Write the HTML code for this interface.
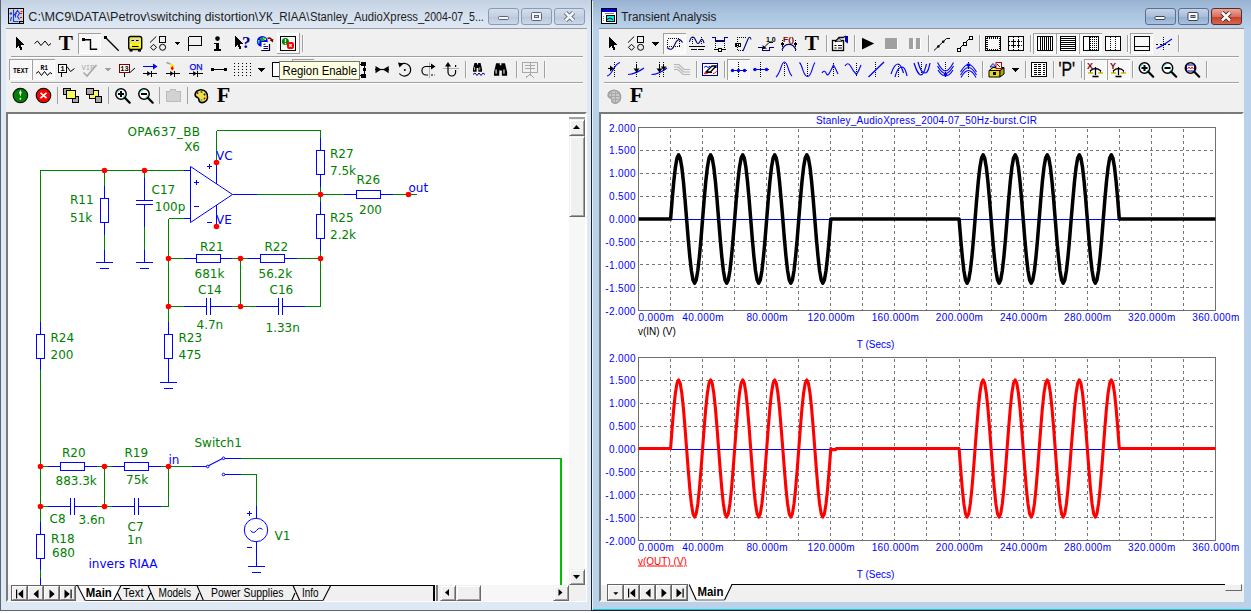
<!DOCTYPE html><html><head><meta charset="utf-8"><title>MC9</title><style>
html,body{margin:0;padding:0}
body{width:1251px;height:613px;position:relative;overflow:hidden;background:#fff;font-family:"Liberation Sans",sans-serif;font-size:12px;color:#000}
.abs,.abs *{position:absolute}
div,svg,span{position:absolute;box-sizing:border-box}
.win{top:-1px;height:612px;border:1px solid #4a4f57}
#wl{left:0;width:592px;background:linear-gradient(#c3d1e2 0,#d3dfed 14px,#dfe9f5 28px,#dfe9f5 100%);border-color:#5d6670}
#wr{left:591px;width:661px;background:linear-gradient(#98b3d1 0,#abc4e0 14px,#b9d1ea 28px,#b9d1ea 100%);border-color:#1d2227}
.title{top:8px;height:18px;line-height:18px;font-size:12px;white-space:nowrap;color:#000}
.client{background:#f0f0f0}
.cb{top:8px;height:17px;width:31px;border:1px solid #8a9bb8;border-radius:3px;background:linear-gradient(#d5deeb,#c3cfe0 50%,#b9c7db 51%,#cdd8e7)}
.cbr{top:8px;height:17px;width:31px;border:1px solid #5b6f8f;border-radius:3px;background:linear-gradient(#c4d3e7,#a9bedb 50%,#93add0 51%,#a9c1df)}
.cbx{background:linear-gradient(#e9a99d,#d9705e 50%,#c4402a 51%,#d8664c);border-color:#5a2a2a}
.hsep{height:2px;border-top:1px solid #a0a0a0;border-bottom:1px solid #fff}
.vsep{width:2px;height:20px;border-left:1px solid #a0a0a0;border-right:1px solid #fff}
.pressed{border:1px solid;border-color:#a0a0a0 #fff #fff #a0a0a0;background:#f8f8f8}
.sunk{border:1px solid;border-color:#828282 #fff #fff #828282}
.sb{background:#f0f0f0;border:1px solid;border-color:#f0f0f0 #696969 #696969 #f0f0f0;box-shadow:inset 1px 1px 0 #fff,inset -1px -1px 0 #a0a0a0}
.track{background:#f7f7f7}
.lab{font-family:"DejaVu Sans","Liberation Sans",sans-serif;font-size:12px;white-space:nowrap;line-height:14px}
.g{color:#0a7d0a}.b{color:#0000ff}
.pl{font-family:"Liberation Sans",sans-serif;font-size:11px;color:#0000ff;white-space:nowrap;line-height:12px}
.tab{font-size:12px;line-height:14px;white-space:nowrap}
</style></head><body><div id="wl" class="win"></div><div class="client" style="left:6px;top:28px;width:581px;height:574px;border-top:1px solid #9a9da3"></div><div class="cb" style="left:488px"></div><div class="cb" style="left:521px"></div><div class="cb" style="left:554px"></div><div id="wr" class="win"></div><div style="left:592px;top:1px;width:1px;height:609px;background:#e8f0fa"></div><div class="client" style="left:599px;top:28px;width:645px;height:574px;border-top:1px solid #8e939b"></div><div class="cbr" style="left:1145px"></div><div class="cbr" style="left:1178px"></div><div class="cbr cbx" style="left:1211px"></div><div style="left:6px;top:112px;width:581px;height:490px;border:2px solid;border-color:#7a7a7a #fff #fff #7a7a7a;background:#fff"></div><div class="track" style="left:569px;top:114px;width:16px;height:471px"></div><div style="left:569px;top:114px;width:16px;height:3px;background:#fff"></div><div style="left:569px;top:117px;width:16px;height:2px;background:#a0a0a0"></div><div class="sb" style="left:569px;top:119px;width:16px;height:17px"></div><svg style="left:569px;top:119px;width:16px;height:17px" viewBox="0 0 16 17" ><polygon points="4.0,10.0 11.0,10.0 7.5,6.0" fill="#000"/></svg><div class="sb" style="left:569px;top:136px;width:16px;height:81px"></div><div class="sb" style="left:569px;top:569px;width:16px;height:16px"></div><svg style="left:569px;top:569px;width:16px;height:16px" viewBox="0 0 16 16" ><polygon points="4.0,6.0 11.0,6.0 7.5,10.0" fill="#000"/></svg><div style="left:8px;top:585px;width:578px;height:16px;background:#f0f0f0"></div><div style="left:78px;top:585px;width:356px;height:1px;background:#000"></div><div style="left:11px;top:585px;width:65px;height:16px;background:#646464"></div><div style="left:12px;top:586px;width:15px;height:14px;background:#f0f0f0;border:1px solid;border-color:#fff #858585 #858585 #fff"></div><div style="left:28px;top:586px;width:15px;height:14px;background:#f0f0f0;border:1px solid;border-color:#fff #858585 #858585 #fff"></div><div style="left:44px;top:586px;width:15px;height:14px;background:#f0f0f0;border:1px solid;border-color:#fff #858585 #858585 #fff"></div><div style="left:60px;top:586px;width:15px;height:14px;background:#f0f0f0;border:1px solid;border-color:#fff #858585 #858585 #fff"></div><svg style="left:11px;top:585px;width:65px;height:16px" viewBox="0 0 65 16" ><rect x="5" y="4.5" width="1.200" height="9" fill="#000"/><polygon points="12.2,4.5 12.2,13.5 7,9.0" fill="#000"/><polygon points="27.5,4.5 27.5,13.5 22.5,9.0" fill="#000"/><polygon points="38.5,4.5 38.5,13.5 43.7,9.0" fill="#000"/><polygon points="53.5,4.5 53.5,13.5 58.8,9.0" fill="#000"/><rect x="59.5" y="4.5" width="1.200" height="9" fill="#000"/></svg><svg style="left:76px;top:585px;width:360px;height:17px" viewBox="0 0 360 17" ><path d="M0 0.500H8.500M43.500 0.500H355" stroke="#000" fill="none"/><path d="M1.500 0.500 L9.200 15.500 H37.500 L45 0.500 Z" fill="#fff" stroke="none"/><path d="M1.500 0.500 L9.200 15.500 M37.500 15.500 L45 0.500" fill="none" stroke="#000" stroke-width="1.100"/><path d="M41.500 8 L45.500 15.500 M70.700 15.500 L74.500 8 M72 0.500 L78.400 15.500 M119.800 15.500 L123 8 M121 0.500 L127.400 15.500 M215.700 15.500 L219 8 M217 0.500 L223.700 15.500 M247 15.500 L254.700 0.500" fill="none" stroke="#000" stroke-width="1.100"/><path d="M9.200 15.500 H247" stroke="#404040" fill="none"/><text x="9.800" y="11.500" font-weight="bold" textLength="26" font-family="Liberation Sans,sans-serif" font-size="12px" lengthAdjust="spacingAndGlyphs">Main</text><text x="47" y="11.500" textLength="20.500" font-family="Liberation Sans,sans-serif" font-size="12px" lengthAdjust="spacingAndGlyphs">Text</text><text x="82.500" y="11.500" textLength="32.500" font-family="Liberation Sans,sans-serif" font-size="12px" lengthAdjust="spacingAndGlyphs">Models</text><text x="135" y="11.500" textLength="72.500" font-family="Liberation Sans,sans-serif" font-size="12px" lengthAdjust="spacingAndGlyphs">Power Supplies</text><text x="226" y="11.500" textLength="16.500" font-family="Liberation Sans,sans-serif" font-size="12px" lengthAdjust="spacingAndGlyphs">Info</text></svg><div style="left:433px;top:585px;width:2px;height:16px;background:#000"></div><div style="left:436px;top:585px;width:2px;height:16px;background:#808080"></div><div class="track" style="left:440px;top:585px;width:129px;height:16px"></div><div class="sb" style="left:440px;top:585px;width:16px;height:16px"></div><svg style="left:440px;top:585px;width:16px;height:16px" viewBox="0 0 16 16" ><polygon points="9.0,4.0 9.0,11.0 5.0,7.5" fill="#000"/></svg><div class="sb" style="left:456px;top:585px;width:25px;height:16px"></div><div class="sb" style="left:553px;top:585px;width:16px;height:16px"></div><svg style="left:553px;top:585px;width:16px;height:16px" viewBox="0 0 16 16" ><polygon points="5.5,4.0 5.5,11.0 9.5,7.5" fill="#000"/></svg><div style="left:599px;top:112px;width:645px;height:490px;border:2px solid;border-color:#7a7a7a #fff #fff #7a7a7a;background:#fff"></div><div style="left:593px;top:609px;width:658px;height:1px;background:#17c7d9"></div><div style="left:601px;top:585px;width:643px;height:17px;background:#f0f0f0"></div><div style="left:731px;top:584px;width:495px;height:1px;background:#000"></div><div style="left:607px;top:584px;width:81px;height:17px;background:#646464"></div><div style="left:608px;top:585px;width:15px;height:15px;background:#f0f0f0;border:1px solid;border-color:#fff #858585 #858585 #fff"></div><div style="left:624px;top:585px;width:15px;height:15px;background:#f0f0f0;border:1px solid;border-color:#fff #858585 #858585 #fff"></div><div style="left:640px;top:585px;width:15px;height:15px;background:#f0f0f0;border:1px solid;border-color:#fff #858585 #858585 #fff"></div><div style="left:656px;top:585px;width:15px;height:15px;background:#f0f0f0;border:1px solid;border-color:#fff #858585 #858585 #fff"></div><div style="left:672px;top:585px;width:15px;height:15px;background:#f0f0f0;border:1px solid;border-color:#fff #858585 #858585 #fff"></div><svg style="left:607px;top:584px;width:81px;height:17px" viewBox="0 0 81 17" ><polygon points="6.3,8.3 11.3,8.3 8.8,11" fill="#000"/><rect x="21" y="4.5" width="1.200" height="9" fill="#000"/><polygon points="28.2,4.5 28.2,13.5 23,9.0" fill="#000"/><polygon points="43.5,4.5 43.5,13.5 38.5,9.0" fill="#000"/><polygon points="54.5,4.5 54.5,13.5 59.7,9.0" fill="#000"/><polygon points="69.5,4.5 69.5,13.5 74.8,9.0" fill="#000"/><rect x="75.5" y="4.5" width="1.200" height="9" fill="#000"/></svg><svg style="left:687.5px;top:584px;width:60px;height:18px" viewBox="0 0 60 18" ><path d="M1.200 0.500 L8.200 16 H36.500 L44 0.500 Z" fill="#fff"/><path d="M1.200 0.500 L8.200 16 M36.500 16 L44 0.500" stroke="#000" stroke-width="1.100" fill="none"/><path d="M8.200 16 H36.500" stroke="#606060"/><text x="9.500" y="11.800" font-weight="bold" textLength="26" font-family="Liberation Sans,sans-serif" font-size="12px" lengthAdjust="spacingAndGlyphs">Main</text></svg><div style="left:1225px;top:584px;width:17px;height:7px;background:#f0f0f0;border:1px solid;border-color:#fff #696969 #696969 #fff"></div><svg style="left:8px;top:114px;width:561px;height:471px" viewBox="8 114 561 471" shape-rendering="crispEdges"><line x1="40.5" y1="170.5" x2="184" y2="170.5" stroke="#008000" stroke-width="1"/><line x1="184" y1="170.5" x2="190.5" y2="170.5" stroke="#0000ff" stroke-width="1"/><line x1="40.5" y1="170" x2="40.5" y2="322" stroke="#008000" stroke-width="1"/><line x1="40.5" y1="322" x2="40.5" y2="334.5" stroke="#0000ff" stroke-width="1"/><rect x="36.5" y="334.5" width="8" height="24" fill="#fff" stroke="#0000ff"/><line x1="40.5" y1="358.5" x2="40.5" y2="370" stroke="#0000ff" stroke-width="1"/><line x1="40.5" y1="370" x2="40.5" y2="506.5" stroke="#008000" stroke-width="1"/><line x1="104.5" y1="170.5" x2="104.5" y2="186" stroke="#008000" stroke-width="1"/><line x1="104.5" y1="186" x2="104.5" y2="198.5" stroke="#0000ff" stroke-width="1"/><rect x="100.5" y="198.5" width="8" height="24" fill="#fff" stroke="#0000ff"/><line x1="104.5" y1="222.5" x2="104.5" y2="235" stroke="#0000ff" stroke-width="1"/><line x1="104.5" y1="235" x2="104.5" y2="250" stroke="#008000" stroke-width="1"/><line x1="104.5" y1="250" x2="104.5" y2="262.5" stroke="#0000ff" stroke-width="1"/><line x1="96.0" y1="262.5" x2="113.0" y2="262.5" stroke="#0000ff" stroke-width="1"/><line x1="100.0" y1="268.5" x2="109.0" y2="268.5" stroke="#0000ff" stroke-width="1"/><line x1="144.5" y1="170.5" x2="144.5" y2="178" stroke="#008000" stroke-width="1"/><line x1="144.5" y1="178" x2="144.5" y2="200.5" stroke="#0000ff" stroke-width="1"/><line x1="136.0" y1="200.5" x2="153.0" y2="200.5" stroke="#0000ff" stroke-width="1"/><line x1="136.0" y1="204.5" x2="153.0" y2="204.5" stroke="#0000ff" stroke-width="1"/><line x1="144.5" y1="204.5" x2="144.5" y2="227" stroke="#0000ff" stroke-width="1"/><line x1="144.5" y1="227" x2="144.5" y2="250" stroke="#008000" stroke-width="1"/><line x1="144.5" y1="250" x2="144.5" y2="262.5" stroke="#0000ff" stroke-width="1"/><line x1="136.0" y1="262.5" x2="153.0" y2="262.5" stroke="#0000ff" stroke-width="1"/><line x1="140.0" y1="268.5" x2="149.0" y2="268.5" stroke="#0000ff" stroke-width="1"/><path d="M190.5 166.5 L190.5 222.5 L232.5 194.5 Z" fill="none" stroke="#0000ff" shape-rendering="auto"/><line x1="232.5" y1="194.5" x2="257" y2="194.5" stroke="#0000ff" stroke-width="1"/><line x1="257" y1="194.5" x2="344" y2="194.5" stroke="#008000" stroke-width="1"/><line x1="216.5" y1="130.5" x2="216.5" y2="162" stroke="#008000" stroke-width="1"/><line x1="216.5" y1="162" x2="216.5" y2="184" stroke="#0000ff" stroke-width="1"/><line x1="216.5" y1="130.5" x2="320.5" y2="130.5" stroke="#008000" stroke-width="1"/><line x1="216.5" y1="205" x2="216.5" y2="226.5" stroke="#0000ff" stroke-width="1"/><line x1="207" y1="166.5" x2="212" y2="166.5" stroke="#0000ff" stroke-width="1"/><line x1="209.5" y1="164" x2="209.5" y2="169" stroke="#0000ff" stroke-width="1"/><line x1="194" y1="182.5" x2="199" y2="182.5" stroke="#0000ff" stroke-width="1"/><line x1="196.5" y1="180" x2="196.5" y2="185" stroke="#0000ff" stroke-width="1"/><line x1="194" y1="206.5" x2="199" y2="206.5" stroke="#0000ff" stroke-width="1"/><line x1="207" y1="222.5" x2="212" y2="222.5" stroke="#0000ff" stroke-width="1"/><line x1="168.5" y1="218.5" x2="184" y2="218.5" stroke="#008000" stroke-width="1"/><line x1="184" y1="218.5" x2="190.5" y2="218.5" stroke="#0000ff" stroke-width="1"/><line x1="168.5" y1="218.5" x2="168.5" y2="322" stroke="#008000" stroke-width="1"/><line x1="168.5" y1="322" x2="168.5" y2="334.5" stroke="#0000ff" stroke-width="1"/><rect x="164.5" y="334.5" width="8" height="24" fill="#fff" stroke="#0000ff"/><line x1="168.5" y1="358.5" x2="168.5" y2="382.5" stroke="#0000ff" stroke-width="1"/><line x1="160.0" y1="382.5" x2="177.0" y2="382.5" stroke="#0000ff" stroke-width="1"/><line x1="164.0" y1="388.5" x2="173.0" y2="388.5" stroke="#0000ff" stroke-width="1"/><line x1="320.5" y1="130.5" x2="320.5" y2="138" stroke="#008000" stroke-width="1"/><line x1="320.5" y1="138" x2="320.5" y2="150.5" stroke="#0000ff" stroke-width="1"/><rect x="316.5" y="150.5" width="8" height="24" fill="#fff" stroke="#0000ff"/><line x1="320.5" y1="174.5" x2="320.5" y2="187" stroke="#0000ff" stroke-width="1"/><line x1="320.5" y1="187" x2="320.5" y2="202" stroke="#008000" stroke-width="1"/><line x1="320.5" y1="202" x2="320.5" y2="214.5" stroke="#0000ff" stroke-width="1"/><rect x="316.5" y="214.5" width="8" height="24" fill="#fff" stroke="#0000ff"/><line x1="320.5" y1="238.5" x2="320.5" y2="251" stroke="#0000ff" stroke-width="1"/><line x1="320.5" y1="251" x2="320.5" y2="306.5" stroke="#008000" stroke-width="1"/><line x1="344" y1="194.5" x2="356.5" y2="194.5" stroke="#0000ff" stroke-width="1"/><rect x="356.5" y="190.5" width="24" height="8" fill="#fff" stroke="#0000ff"/><line x1="380.5" y1="194.5" x2="393" y2="194.5" stroke="#0000ff" stroke-width="1"/><line x1="393" y1="194.5" x2="417" y2="194.5" stroke="#008000" stroke-width="1"/><line x1="168.5" y1="258.5" x2="184" y2="258.5" stroke="#008000" stroke-width="1"/><line x1="184" y1="258.5" x2="196.5" y2="258.5" stroke="#0000ff" stroke-width="1"/><rect x="196.5" y="254.5" width="24" height="8" fill="#fff" stroke="#0000ff"/><line x1="220.5" y1="258.5" x2="232" y2="258.5" stroke="#0000ff" stroke-width="1"/><line x1="232" y1="258.5" x2="248" y2="258.5" stroke="#008000" stroke-width="1"/><line x1="248" y1="258.5" x2="260.5" y2="258.5" stroke="#0000ff" stroke-width="1"/><rect x="260.5" y="254.5" width="24" height="8" fill="#fff" stroke="#0000ff"/><line x1="284.5" y1="258.5" x2="297" y2="258.5" stroke="#0000ff" stroke-width="1"/><line x1="297" y1="258.5" x2="320.5" y2="258.5" stroke="#008000" stroke-width="1"/><line x1="240.5" y1="258.5" x2="240.5" y2="306.5" stroke="#008000" stroke-width="1"/><line x1="168.5" y1="306.5" x2="184" y2="306.5" stroke="#008000" stroke-width="1"/><line x1="184" y1="306.5" x2="206.5" y2="306.5" stroke="#0000ff" stroke-width="1"/><line x1="206.5" y1="298.0" x2="206.5" y2="315.0" stroke="#0000ff" stroke-width="1"/><line x1="210.5" y1="298.0" x2="210.5" y2="315.0" stroke="#0000ff" stroke-width="1"/><line x1="210.5" y1="306.5" x2="232" y2="306.5" stroke="#0000ff" stroke-width="1"/><line x1="232" y1="306.5" x2="256" y2="306.5" stroke="#008000" stroke-width="1"/><line x1="256" y1="306.5" x2="278.5" y2="306.5" stroke="#0000ff" stroke-width="1"/><line x1="278.5" y1="298.0" x2="278.5" y2="315.0" stroke="#0000ff" stroke-width="1"/><line x1="282.5" y1="298.0" x2="282.5" y2="315.0" stroke="#0000ff" stroke-width="1"/><line x1="282.5" y1="306.5" x2="305" y2="306.5" stroke="#0000ff" stroke-width="1"/><line x1="305" y1="306.5" x2="321" y2="306.5" stroke="#008000" stroke-width="1"/><line x1="40.5" y1="466.5" x2="48" y2="466.5" stroke="#008000" stroke-width="1"/><line x1="48" y1="466.5" x2="60.5" y2="466.5" stroke="#0000ff" stroke-width="1"/><rect x="60.5" y="462.5" width="24" height="8" fill="#fff" stroke="#0000ff"/><line x1="84.5" y1="466.5" x2="97" y2="466.5" stroke="#0000ff" stroke-width="1"/><line x1="97" y1="466.5" x2="112" y2="466.5" stroke="#008000" stroke-width="1"/><line x1="112" y1="466.5" x2="124.5" y2="466.5" stroke="#0000ff" stroke-width="1"/><rect x="124.5" y="462.5" width="24" height="8" fill="#fff" stroke="#0000ff"/><line x1="148.5" y1="466.5" x2="161" y2="466.5" stroke="#0000ff" stroke-width="1"/><line x1="161" y1="466.5" x2="192" y2="466.5" stroke="#008000" stroke-width="1"/><line x1="192" y1="466.5" x2="206.5" y2="466.5" stroke="#0000ff" stroke-width="1"/><line x1="104.5" y1="466.5" x2="104.5" y2="506.5" stroke="#008000" stroke-width="1"/><line x1="168.5" y1="466.5" x2="168.5" y2="506.5" stroke="#008000" stroke-width="1"/><line x1="40.5" y1="506.5" x2="48" y2="506.5" stroke="#008000" stroke-width="1"/><line x1="48" y1="506.5" x2="70.5" y2="506.5" stroke="#0000ff" stroke-width="1"/><line x1="70.5" y1="498.0" x2="70.5" y2="515.0" stroke="#0000ff" stroke-width="1"/><line x1="74.5" y1="498.0" x2="74.5" y2="515.0" stroke="#0000ff" stroke-width="1"/><line x1="74.5" y1="506.5" x2="97" y2="506.5" stroke="#0000ff" stroke-width="1"/><line x1="97" y1="506.5" x2="112" y2="506.5" stroke="#008000" stroke-width="1"/><line x1="112" y1="506.5" x2="134.5" y2="506.5" stroke="#0000ff" stroke-width="1"/><line x1="134.5" y1="498.0" x2="134.5" y2="515.0" stroke="#0000ff" stroke-width="1"/><line x1="138.5" y1="498.0" x2="138.5" y2="515.0" stroke="#0000ff" stroke-width="1"/><line x1="138.5" y1="506.5" x2="161" y2="506.5" stroke="#0000ff" stroke-width="1"/><line x1="161" y1="506.5" x2="169" y2="506.5" stroke="#008000" stroke-width="1"/><line x1="40.5" y1="506.5" x2="40.5" y2="522" stroke="#008000" stroke-width="1"/><line x1="40.5" y1="522" x2="40.5" y2="534.5" stroke="#0000ff" stroke-width="1"/><rect x="36.5" y="534.5" width="8" height="24" fill="#fff" stroke="#0000ff"/><line x1="40.5" y1="558.5" x2="40.5" y2="570" stroke="#0000ff" stroke-width="1"/><line x1="40.5" y1="570" x2="40.5" y2="578" stroke="#008000" stroke-width="1"/><line x1="40.5" y1="578" x2="40.5" y2="586" stroke="#0000ff" stroke-width="1"/><g shape-rendering="auto"><line x1="208" y1="466" x2="223" y2="458.3" stroke="#0000ff" stroke-width="1.1"/><circle cx="207.7" cy="466.5" r="1.300" fill="#fff" stroke="#0000ff"/><circle cx="223.5" cy="458.3" r="1.300" fill="#fff" stroke="#0000ff"/><circle cx="223.5" cy="474.5" r="1.300" fill="#fff" stroke="#0000ff"/></g><line x1="225" y1="458.5" x2="241" y2="458.5" stroke="#0000ff" stroke-width="1"/><line x1="241" y1="458.5" x2="560.5" y2="458.5" stroke="#008000" stroke-width="1"/><line x1="225" y1="474.5" x2="241" y2="474.5" stroke="#0000ff" stroke-width="1"/><line x1="241" y1="474.5" x2="256.5" y2="474.5" stroke="#008000" stroke-width="1"/><line x1="256.5" y1="474.5" x2="256.5" y2="506" stroke="#008000" stroke-width="1"/><line x1="256.5" y1="506" x2="256.5" y2="518.5" stroke="#0000ff" stroke-width="1"/><g shape-rendering="auto" fill="none" stroke="#0000ff"><circle cx="256" cy="530" r="11.700" fill="#fff"/><path d="M250.500 530.500 Q253.500 534.500 256.500 530.500 T262.500 529.500"/></g><line x1="256.5" y1="541.5" x2="256.5" y2="566.5" stroke="#0000ff" stroke-width="1"/><line x1="248.0" y1="566.5" x2="265.0" y2="566.5" stroke="#0000ff" stroke-width="1"/><line x1="252.0" y1="572.5" x2="261.0" y2="572.5" stroke="#0000ff" stroke-width="1"/><line x1="247" y1="513.5" x2="252" y2="513.5" stroke="#0000ff" stroke-width="1"/><line x1="249.5" y1="511" x2="249.5" y2="516" stroke="#0000ff" stroke-width="1"/><line x1="247" y1="547.5" x2="252" y2="547.5" stroke="#0000ff" stroke-width="1"/><rect x="560" y="458" width="2" height="127" fill="#00c000"/><g shape-rendering="auto"><circle cx="104.5" cy="170.5" r="2.800" fill="#ff0000"/><circle cx="144.5" cy="170.5" r="2.800" fill="#ff0000"/><circle cx="216.5" cy="162.5" r="2.800" fill="#ff0000"/><circle cx="216.5" cy="226.5" r="2.800" fill="#ff0000"/><circle cx="320.5" cy="194.5" r="2.800" fill="#ff0000"/><circle cx="408.5" cy="194.5" r="2.800" fill="#ff0000"/><circle cx="168.5" cy="258.5" r="2.800" fill="#ff0000"/><circle cx="240.5" cy="258.5" r="2.800" fill="#ff0000"/><circle cx="320.5" cy="258.5" r="2.800" fill="#ff0000"/><circle cx="168.5" cy="306.5" r="2.800" fill="#ff0000"/><circle cx="240.5" cy="306.5" r="2.800" fill="#ff0000"/><circle cx="40.5" cy="466.5" r="2.800" fill="#ff0000"/><circle cx="104.5" cy="466.5" r="2.800" fill="#ff0000"/><circle cx="168.5" cy="466.5" r="2.800" fill="#ff0000"/><circle cx="40.5" cy="506.5" r="2.800" fill="#ff0000"/><circle cx="104.5" cy="506.5" r="2.800" fill="#ff0000"/></g><g font-family="DejaVu Sans, Liberation Sans, sans-serif" font-size="12px"><text x="127.500" y="136" fill="#008000" textLength="72.500" lengthAdjust="spacing">OPA637_BB</text><text x="200" y="151" fill="#008000" text-anchor="end">X6</text><text x="216" y="159.5" fill="#0000ff" text-anchor="start">VC</text><text x="216" y="223.5" fill="#0000ff" text-anchor="start">VE</text><text x="70" y="204" fill="#008000" text-anchor="start">R11</text><text x="70" y="222" fill="#008000" text-anchor="start">51k</text><text x="151.5" y="194" fill="#008000" text-anchor="start">C17</text><text x="154.8" y="211" fill="#008000" text-anchor="start">100p</text><text x="330" y="158" fill="#008000" text-anchor="start">R27</text><text x="330" y="175" fill="#008000" text-anchor="start">7.5k</text><text x="356.5" y="184" fill="#008000" text-anchor="start">R26</text><text x="359" y="214" fill="#008000" text-anchor="start">200</text><text x="330" y="221.5" fill="#008000" text-anchor="start">R25</text><text x="330" y="238.5" fill="#008000" text-anchor="start">2.2k</text><text x="408.5" y="191.5" fill="#0000ff" text-anchor="start">out</text><text x="200" y="250.5" fill="#008000" text-anchor="start">R21</text><text x="194.5" y="277.5" fill="#008000" text-anchor="start">681k</text><text x="264.5" y="250.5" fill="#008000" text-anchor="start">R22</text><text x="258.5" y="277.5" fill="#008000" text-anchor="start">56.2k</text><text x="198" y="293.5" fill="#008000" text-anchor="start">C14</text><text x="196.5" y="328.5" fill="#008000" text-anchor="start">4.7n</text><text x="269.5" y="293.5" fill="#008000" text-anchor="start">C16</text><text x="265.5" y="331.5" fill="#008000" text-anchor="start">1.33n</text><text x="50.5" y="341.5" fill="#008000" text-anchor="start">R24</text><text x="50.5" y="358.5" fill="#008000" text-anchor="start">200</text><text x="178.5" y="341.5" fill="#008000" text-anchor="start">R23</text><text x="178.5" y="358.5" fill="#008000" text-anchor="start">475</text><text x="194.5" y="446.5" fill="#008000" text-anchor="start">Switch1</text><text x="168.5" y="463.5" fill="#0000ff" text-anchor="start">in</text><text x="62" y="456.5" fill="#008000" text-anchor="start">R20</text><text x="55.5" y="484.5" fill="#008000" text-anchor="start">883.3k</text><text x="124.5" y="456.5" fill="#008000" text-anchor="start">R19</text><text x="126" y="483.5" fill="#008000" text-anchor="start">75k</text><text x="49.5" y="522.5" fill="#008000" text-anchor="start">C8</text><text x="78.5" y="523.5" fill="#008000" text-anchor="start">3.6n</text><text x="127.5" y="530.5" fill="#008000" text-anchor="start">C7</text><text x="127" y="543.5" fill="#008000" text-anchor="start">1n</text><text x="51" y="542.5" fill="#008000" text-anchor="start">R18</text><text x="52" y="556.5" fill="#008000" text-anchor="start">680</text><text x="88.5" y="567.5" fill="#0000ff" text-anchor="start">invers RIAA</text><text x="274.5" y="540" fill="#008000" text-anchor="start">V1</text></g></svg><svg style="left:601px;top:114px;width:642px;height:470px" viewBox="601 114 642 470" shape-rendering="crispEdges"><text x="926.5" y="124" text-anchor="middle" font-family="Liberation Sans, sans-serif" font-size="10px" letter-spacing="0.210" fill="#0000ff" shape-rendering="auto">Stanley_AudioXpress_2004-07_50Hz-burst.CIR</text><rect x="638.5" y="127.5" width="577.0" height="183.0" fill="#fff" stroke="#707070"/><path d="M670.5 128.5V310.0M702.5 128.5V310.0M734.5 128.5V310.0M766.5 128.5V310.0M798.5 128.5V310.0M830.5 128.5V310.0M862.5 128.5V310.0M894.5 128.5V310.0M926.5 128.5V310.0M959.5 128.5V310.0M991.5 128.5V310.0M1023.5 128.5V310.0M1055.5 128.5V310.0M1087.5 128.5V310.0M1119.5 128.5V310.0M1151.5 128.5V310.0M1183.5 128.5V310.0M639.5 150.5H1215.0M639.5 173.5H1215.0M639.5 196.5H1215.0M639.5 241.5H1215.0M639.5 264.5H1215.0M639.5 287.5H1215.0" stroke="#767676" stroke-dasharray="3 3" fill="none"/><line x1="639.0" y1="219.5" x2="1215.0" y2="219.5" stroke="#0000ff"/><polyline points="638.5,219.0 670.6,219.0 672.2,199.2 673.8,181.4 675.4,167.2 677.0,158.1 678.6,154.9 680.2,158.1 681.8,167.2 683.4,181.4 685.0,199.2 686.6,219.0 688.2,238.8 689.8,256.6 691.4,270.8 693.0,279.9 694.6,283.1 696.2,279.9 697.8,270.8 699.4,256.6 701.0,238.8 702.6,219.0 704.2,199.2 705.8,181.4 707.4,167.2 709.0,158.1 710.6,154.9 712.2,158.1 713.8,167.2 715.4,181.4 717.0,199.2 718.6,219.0 720.2,238.8 721.8,256.6 723.4,270.8 725.0,279.9 726.7,283.1 728.3,279.9 729.9,270.8 731.5,256.6 733.1,238.8 734.7,219.0 736.3,199.2 737.9,181.4 739.5,167.2 741.1,158.1 742.7,154.9 744.3,158.1 745.9,167.2 747.5,181.4 749.1,199.2 750.7,219.0 752.3,238.8 753.9,256.6 755.5,270.8 757.1,279.9 758.7,283.1 760.3,279.9 761.9,270.8 763.5,256.6 765.1,238.8 766.7,219.0 768.3,199.2 769.9,181.4 771.5,167.2 773.1,158.1 774.7,154.9 776.3,158.1 777.9,167.2 779.5,181.4 781.1,199.2 782.8,219.0 784.4,238.8 786.0,256.6 787.6,270.8 789.2,279.9 790.8,283.1 792.4,279.9 794.0,270.8 795.6,256.6 797.2,238.8 798.8,219.0 800.4,199.2 802.0,181.4 803.6,167.2 805.2,158.1 806.8,154.9 808.4,158.1 810.0,167.2 811.6,181.4 813.2,199.2 814.8,219.0 816.4,238.8 818.0,256.6 819.6,270.8 821.2,279.9 822.8,283.1 824.4,279.9 826.0,270.8 827.6,256.6 829.2,238.8 830.8,219.0 959.1,219.0 960.7,238.8 962.3,256.6 963.9,270.8 965.5,279.9 967.1,283.1 968.7,279.9 970.3,270.8 971.9,256.6 973.5,238.8 975.1,219.0 976.7,199.2 978.3,181.4 979.9,167.2 981.5,158.1 983.1,154.9 984.7,158.1 986.3,167.2 987.9,181.4 989.5,199.2 991.1,219.0 992.7,238.8 994.3,256.6 995.9,270.8 997.5,279.9 999.1,283.1 1000.7,279.9 1002.3,270.8 1003.9,256.6 1005.5,238.8 1007.1,219.0 1008.7,199.2 1010.3,181.4 1011.9,167.2 1013.5,158.1 1015.2,154.9 1016.8,158.1 1018.4,167.2 1020.0,181.4 1021.6,199.2 1023.2,219.0 1024.8,238.8 1026.4,256.6 1028.0,270.8 1029.6,279.9 1031.2,283.1 1032.8,279.9 1034.4,270.8 1036.0,256.6 1037.6,238.8 1039.2,219.0 1040.8,199.2 1042.4,181.4 1044.0,167.2 1045.6,158.1 1047.2,154.9 1048.8,158.1 1050.4,167.2 1052.0,181.4 1053.6,199.2 1055.2,219.0 1056.8,238.8 1058.4,256.6 1060.0,270.8 1061.6,279.9 1063.2,283.1 1064.8,279.9 1066.4,270.8 1068.0,256.6 1069.6,238.8 1071.2,219.0 1072.9,199.2 1074.5,181.4 1076.1,167.2 1077.7,158.1 1079.3,154.9 1080.9,158.1 1082.5,167.2 1084.1,181.4 1085.7,199.2 1087.3,219.0 1088.9,238.8 1090.5,256.6 1092.1,270.8 1093.7,279.9 1095.3,283.1 1096.9,279.9 1098.5,270.8 1100.1,256.6 1101.7,238.8 1103.3,219.0 1104.9,199.2 1106.5,181.4 1108.1,167.2 1109.7,158.1 1111.3,154.9 1112.9,158.1 1114.5,167.2 1116.1,181.4 1117.7,199.2 1119.3,219.0 1215.5,219.0" fill="none" stroke="#000" stroke-width="3.5" stroke-linejoin="round" shape-rendering="auto"/><g font-family="Liberation Sans, sans-serif" font-size="10px" fill="#0000ff" shape-rendering="auto"><text x="635.8" y="131.5" text-anchor="end" letter-spacing="0.350">2.000</text><text x="635.8" y="154.4" text-anchor="end" letter-spacing="0.350">1.500</text><text x="635.8" y="177.2" text-anchor="end" letter-spacing="0.350">1.000</text><text x="635.8" y="200.1" text-anchor="end" letter-spacing="0.350">0.500</text><text x="635.8" y="223.0" text-anchor="end" letter-spacing="0.350">0.000</text><text x="635.8" y="245.9" text-anchor="end" letter-spacing="0.350">-0.500</text><text x="635.8" y="268.8" text-anchor="end" letter-spacing="0.350">-1.000</text><text x="635.8" y="291.6" text-anchor="end" letter-spacing="0.350">-1.500</text><text x="635.8" y="314.5" text-anchor="end" letter-spacing="0.350">-2.000</text><text x="638.5" y="321.0" letter-spacing="0.380">0.000m</text><text x="703.1111111111111" y="321.0" text-anchor="middle" letter-spacing="0.380">40.000m</text><text x="767.2222222222222" y="321.0" text-anchor="middle" letter-spacing="0.380">80.000m</text><text x="831.3333333333334" y="321.0" text-anchor="middle" letter-spacing="0.380">120.000m</text><text x="895.4444444444445" y="321.0" text-anchor="middle" letter-spacing="0.380">160.000m</text><text x="959.5555555555555" y="321.0" text-anchor="middle" letter-spacing="0.380">200.000m</text><text x="1023.6666666666667" y="321.0" text-anchor="middle" letter-spacing="0.380">240.000m</text><text x="1087.7777777777778" y="321.0" text-anchor="middle" letter-spacing="0.380">280.000m</text><text x="1151.888888888889" y="321.0" text-anchor="middle" letter-spacing="0.380">320.000m</text><text x="1216.0" y="321.0" text-anchor="middle" letter-spacing="0.380">360.000m</text><text x="638.0" y="334.5" fill="#000">v(IN) (V)</text><text x="875.5" y="347.5" text-anchor="middle">T (Secs)</text></g><rect x="638.5" y="357.5" width="577.0" height="183.0" fill="#fff" stroke="#707070"/><path d="M670.5 358.5V540.0M702.5 358.5V540.0M734.5 358.5V540.0M766.5 358.5V540.0M798.5 358.5V540.0M830.5 358.5V540.0M862.5 358.5V540.0M894.5 358.5V540.0M926.5 358.5V540.0M959.5 358.5V540.0M991.5 358.5V540.0M1023.5 358.5V540.0M1055.5 358.5V540.0M1087.5 358.5V540.0M1119.5 358.5V540.0M1151.5 358.5V540.0M1183.5 358.5V540.0M639.5 380.5H1215.0M639.5 403.5H1215.0M639.5 426.5H1215.0M639.5 471.5H1215.0M639.5 494.5H1215.0M639.5 517.5H1215.0" stroke="#767676" stroke-dasharray="3 3" fill="none"/><line x1="639.0" y1="449.5" x2="1215.0" y2="449.5" stroke="#0000ff"/><polyline points="638.5,448.5 670.6,448.5 672.2,427.3 673.8,408.2 675.4,393.0 677.0,383.2 678.6,379.9 680.2,383.2 681.8,393.0 683.4,408.2 685.0,427.3 686.6,448.5 688.2,469.7 689.8,488.8 691.4,504.0 693.0,513.8 694.6,517.1 696.2,513.8 697.8,504.0 699.4,488.8 701.0,469.7 702.6,448.5 704.2,427.3 705.8,408.2 707.4,393.0 709.0,383.2 710.6,379.9 712.2,383.2 713.8,393.0 715.4,408.2 717.0,427.3 718.6,448.5 720.2,469.7 721.8,488.8 723.4,504.0 725.0,513.8 726.7,517.1 728.3,513.8 729.9,504.0 731.5,488.8 733.1,469.7 734.7,448.5 736.3,427.3 737.9,408.2 739.5,393.0 741.1,383.2 742.7,379.9 744.3,383.2 745.9,393.0 747.5,408.2 749.1,427.3 750.7,448.5 752.3,469.7 753.9,488.8 755.5,504.0 757.1,513.8 758.7,517.1 760.3,513.8 761.9,504.0 763.5,488.8 765.1,469.7 766.7,448.5 768.3,427.3 769.9,408.2 771.5,393.0 773.1,383.2 774.7,379.9 776.3,383.2 777.9,393.0 779.5,408.2 781.1,427.3 782.8,448.5 784.4,469.7 786.0,488.8 787.6,504.0 789.2,513.8 790.8,517.1 792.4,513.8 794.0,504.0 795.6,488.8 797.2,469.7 798.8,448.5 800.4,427.3 802.0,408.2 803.6,393.0 805.2,383.2 806.8,379.9 808.4,383.2 810.0,393.0 811.6,408.2 813.2,427.3 814.8,448.5 816.4,469.7 818.0,488.8 819.6,504.0 821.2,513.8 822.8,517.1 824.4,513.8 826.0,504.0 827.6,488.8 829.2,469.7 830.8,448.5 831.3,449.6 835.6,449.6 836.3,448.5 959.1,448.5 960.7,469.7 962.3,488.8 963.9,504.0 965.5,513.8 967.1,517.1 968.7,513.8 970.3,504.0 971.9,488.8 973.5,469.7 975.1,448.5 976.7,427.3 978.3,408.2 979.9,393.0 981.5,383.2 983.1,379.9 984.7,383.2 986.3,393.0 987.9,408.2 989.5,427.3 991.1,448.5 992.7,469.7 994.3,488.8 995.9,504.0 997.5,513.8 999.1,517.1 1000.7,513.8 1002.3,504.0 1003.9,488.8 1005.5,469.7 1007.1,448.5 1008.7,427.3 1010.3,408.2 1011.9,393.0 1013.5,383.2 1015.2,379.9 1016.8,383.2 1018.4,393.0 1020.0,408.2 1021.6,427.3 1023.2,448.5 1024.8,469.7 1026.4,488.8 1028.0,504.0 1029.6,513.8 1031.2,517.1 1032.8,513.8 1034.4,504.0 1036.0,488.8 1037.6,469.7 1039.2,448.5 1040.8,427.3 1042.4,408.2 1044.0,393.0 1045.6,383.2 1047.2,379.9 1048.8,383.2 1050.4,393.0 1052.0,408.2 1053.6,427.3 1055.2,448.5 1056.8,469.7 1058.4,488.8 1060.0,504.0 1061.6,513.8 1063.2,517.1 1064.8,513.8 1066.4,504.0 1068.0,488.8 1069.6,469.7 1071.2,448.5 1072.9,427.3 1074.5,408.2 1076.1,393.0 1077.7,383.2 1079.3,379.9 1080.9,383.2 1082.5,393.0 1084.1,408.2 1085.7,427.3 1087.3,448.5 1088.9,469.7 1090.5,488.8 1092.1,504.0 1093.7,513.8 1095.3,517.1 1096.9,513.8 1098.5,504.0 1100.1,488.8 1101.7,469.7 1103.3,448.5 1104.9,427.3 1106.5,408.2 1108.1,393.0 1109.7,383.2 1111.3,379.9 1112.9,383.2 1114.5,393.0 1116.1,408.2 1117.7,427.3 1119.3,448.5 1215.5,448.5" fill="none" stroke="#ff0000" stroke-width="3.1" stroke-linejoin="round" shape-rendering="auto"/><g font-family="Liberation Sans, sans-serif" font-size="10px" fill="#0000ff" shape-rendering="auto"><text x="635.8" y="361.5" text-anchor="end" letter-spacing="0.350">2.000</text><text x="635.8" y="384.4" text-anchor="end" letter-spacing="0.350">1.500</text><text x="635.8" y="407.2" text-anchor="end" letter-spacing="0.350">1.000</text><text x="635.8" y="430.1" text-anchor="end" letter-spacing="0.350">0.500</text><text x="635.8" y="453.0" text-anchor="end" letter-spacing="0.350">0.000</text><text x="635.8" y="475.9" text-anchor="end" letter-spacing="0.350">-0.500</text><text x="635.8" y="498.8" text-anchor="end" letter-spacing="0.350">-1.000</text><text x="635.8" y="521.6" text-anchor="end" letter-spacing="0.350">-1.500</text><text x="635.8" y="544.5" text-anchor="end" letter-spacing="0.350">-2.000</text><text x="638.5" y="551.0" letter-spacing="0.380">0.000m</text><text x="703.1111111111111" y="551.0" text-anchor="middle" letter-spacing="0.380">40.000m</text><text x="767.2222222222222" y="551.0" text-anchor="middle" letter-spacing="0.380">80.000m</text><text x="831.3333333333334" y="551.0" text-anchor="middle" letter-spacing="0.380">120.000m</text><text x="895.4444444444445" y="551.0" text-anchor="middle" letter-spacing="0.380">160.000m</text><text x="959.5555555555555" y="551.0" text-anchor="middle" letter-spacing="0.380">200.000m</text><text x="1023.6666666666667" y="551.0" text-anchor="middle" letter-spacing="0.380">240.000m</text><text x="1087.7777777777778" y="551.0" text-anchor="middle" letter-spacing="0.380">280.000m</text><text x="1151.888888888889" y="551.0" text-anchor="middle" letter-spacing="0.380">320.000m</text><text x="1216.0" y="551.0" text-anchor="middle" letter-spacing="0.380">360.000m</text><text x="638.0" y="564.5" fill="#ff0000" text-decoration="underline">v(OUT) (V)</text><text x="875.5" y="577.5" text-anchor="middle">T (Secs)</text></g></svg><svg style="left:0;top:0;width:1251px;height:613px" viewBox="0 0 1251 613" shape-rendering="crispEdges"><rect x="11" y="56" width="572" height="1" fill="#a0a0a0"/><rect x="11" y="57" width="572" height="1" fill="#fff"/><rect x="11" y="82" width="572" height="1" fill="#a0a0a0"/><rect x="11" y="83" width="572" height="1" fill="#fff"/><path d="M16 37 L16 48 L18.6 45.6 L20.6 50.2 L22.6 49.4 L20.7 44.9 L24.2 44.9 Z" fill="#000"/><polyline points="34.5,43.5 37.5,41 41,45.5 45,41 48.5,45.5 51,43.5" fill="none" stroke="#000" shape-rendering="auto"/><text x="58.800" y="50" font-family="Liberation Serif,serif" font-weight="bold" font-size="20px" textLength="14.200" lengthAdjust="spacingAndGlyphs">T</text><rect x="78" y="33" width="23" height="21" fill="#f8f8f8"/><path d="M78.5 54V33.5H101" stroke="#a0a0a0" fill="none"/><path d="M78.5 53.5H100.5V33.5" stroke="#fff" fill="none"/><rect x="82" y="38" width="3" height="3" fill="#000"/><path d="M85 39.7H90.5V49.2H97.2" stroke="#000" stroke-width="1.4" fill="none" shape-rendering="auto"/><rect x="104" y="36" width="3" height="3" fill="#000"/><line x1="106" y1="38" x2="118.7" y2="50.800" stroke="#000" stroke-width="1.300" shape-rendering="auto"/><g shape-rendering="auto"><rect x="128.7" y="36.5" width="13" height="13" rx="2" fill="#f8f000" stroke="#000" stroke-width="1.4"/><rect x="131" y="38.5" width="8.5" height="4" fill="#d8d8d8"/><path d="M131.5 40.5h2.5M136 40.5h2.5" stroke="#000"/><path d="M132 46.5h6.5" stroke="#000"/><rect x="129.5" y="50" width="3" height="1.6" fill="#000"/><rect x="138" y="50" width="3" height="1.6" fill="#000"/><rect x="130" y="44" width="1.5" height="1.5" fill="#fff"/><rect x="139" y="44" width="1.5" height="1.5" fill="#fff"/></g><g fill="none" stroke="#000" shape-rendering="auto"><line x1="150" y1="42.599999999999994" x2="156.2" y2="36.5"/><rect x="159.5" y="36.8" width="6" height="6" shape-rendering="crispEdges"/><path d="M153.5 44.3 l3 3 l-3 3 l-3 -3 z"/><circle cx="162.6" cy="47.3" r="3"/></g><polygon points="174,41.5 181,41.5 177.5,45.5" fill="#000"/><path d="M188.5 36.5V51M188.5 36.5H201.5V45.5H188.5" stroke="#000" stroke-width="1.3" fill="none"/><circle cx="217.5" cy="38.6" r="2.3" fill="#000" shape-rendering="auto"/><path d="M214 42.5h5.3v6.2h1.8v1.8h-7.3v-1.8h1.9v-4.4h-1.7z" fill="#000"/><path d="M235 36 L235 47 L237.6 44.6 L239.6 49.2 L241.6 48.4 L239.7 43.9 L243.2 43.9 Z" fill="#000"/><text x="242" y="48" font-family="Liberation Serif,serif" font-weight="bold" font-size="17px" fill="#000090">?</text><g shape-rendering="auto"><circle cx="262.300" cy="41.400" r="5.400" fill="#0000ff"/><path d="M259.500 38.500l3-1.500l3.500 1.500l-2 2.500l-3 0z" fill="#20a020"/><path d="M257.500 40.500l2 0l0 3l-1.500 0z" fill="#20c0a0"/><rect x="263" y="37.500" width="1.500" height="1.500" fill="#00ffff"/><rect x="264.500" y="38.500" width="1.500" height="1.500" fill="#ffff00"/><rect x="258" y="40" width="1.500" height="1.500" fill="#00ffff"/><path d="M261.500 42h5.500l2.500 2.500v6h-8z" fill="#fff"/><path d="M261.300 50.500h8.200v-6.500" stroke="#000" fill="none" stroke-width="1.200"/><path d="M263.500 44.300h2M263.500 46.500h4.500M263.500 48.500h4.500" stroke="#000090" stroke-width="1.100"/><path d="M267.500 38.500q3-1.500 4.500 2" stroke="#800000" fill="none" stroke-width="1.400"/><polygon points="269.800,40.200 273.300,38.800 273,42.500" fill="#800000"/></g><rect x="277" y="33" width="23" height="21" fill="#f8f8f8"/><path d="M277.5 54V33.5H300" stroke="#fff" fill="none"/><path d="M277 53.5H299.5V33" stroke="#a0a0a0" fill="none"/><rect x="280.500" y="36.500" width="15" height="14" fill="#f8f8f8" stroke="#000"/><g shape-rendering="auto"><circle cx="285.400" cy="41.500" r="3.500" fill="#008000"/><rect x="284.800" y="39" width="1.300" height="3.200" fill="#fff"/><rect x="284.800" y="43" width="1.300" height="1.300" fill="#fff"/><rect x="287" y="42" width="7" height="7" rx="2" fill="#ff0000"/><path d="M289.200 44.200l2.600 2.600M291.800 44.200l-2.600 2.600" stroke="#fff" stroke-width="1.100"/></g><rect x="302" y="35" width="1" height="17" fill="#a0a0a0"/><rect x="303" y="35" width="1" height="17" fill="#fafafa"/><rect x="9" y="59" width="23" height="21" fill="#f8f8f8"/><path d="M9.5 80V59.5H32" stroke="#a0a0a0" fill="none"/><path d="M9.5 79.5H31.5V59.5" stroke="#fff" fill="none"/><rect x="32" y="59" width="23" height="21" fill="#f8f8f8"/><path d="M32.5 80V59.5H55" stroke="#a0a0a0" fill="none"/><path d="M32.5 79.5H54.5V59.5" stroke="#fff" fill="none"/><text x="13" y="73.200" font-family="Liberation Mono,monospace" font-weight="bold" font-size="7.5px" textLength="15.5" lengthAdjust="spacingAndGlyphs">TEXT</text><text x="40.5" y="70" font-family="Liberation Mono,monospace" font-weight="bold" font-size="7px" textLength="7.5" lengthAdjust="spacingAndGlyphs">R1</text><polyline points="36,73.5 38.5,71.5 41.5,75.5 44.5,71.5 47.5,75.5 50,72.5 52,74" fill="none" stroke="#000" shape-rendering="auto"/><rect x="58.5" y="64.5" width="8" height="8" fill="#fff" stroke="#000" stroke-width="1.3"/><text x="60.3" y="71.3" font-family="Liberation Mono,monospace" font-weight="bold" font-size="7.5px">1</text><path d="M61.5 73V77" stroke="#000"/><polyline points="67,66.5 70.5,71.5 74.5,68.5" fill="none" stroke="#000" shape-rendering="auto"/><text x="81.5" y="69.5" font-family="Liberation Mono,monospace" font-size="8px" fill="#a8a8a8" textLength="13" lengthAdjust="spacingAndGlyphs">VIP</text><polyline points="83.5,72.5 87,76 96.5,65" fill="none" stroke="#a8a8a8" stroke-width="1.6" shape-rendering="auto"/><polygon points="104.5,68 111.5,68 108.0,72" fill="#a0a0a0"/><rect x="119.5" y="64.5" width="10" height="8" fill="#fff" stroke="#800000" stroke-width="1.3"/><text x="120.3" y="71.3" font-family="Liberation Mono,monospace" font-weight="bold" font-size="7.5px" textLength="8.4" lengthAdjust="spacingAndGlyphs">13</text><path d="M124.5 73V77" stroke="#000"/><line x1="130" y1="72.5" x2="135" y2="68" stroke="#000" shape-rendering="auto"/><path d="M143 66.5H155" stroke="#0000ff" stroke-width="1.2"/><polygon points="153,63.5 157.5,66.5 153,69.5" fill="#0000ff" shape-rendering="auto"/><rect x="143" y="73" width="14" height="1" fill="#000"/><polygon points="147.2,71 147.2,76 150.8,73.5" fill="#000" shape-rendering="auto"/><rect x="150.8" y="70.5" width="1.3" height="6" fill="#000"/><g shape-rendering="auto"><path d="M166.5 62.5l4 1.5" stroke="#a0a0a0" stroke-width="1.6"/><path d="M172.2 63.5c2.5 2 2.5 5.5 0 7c-2.5-1.500-2.500-5 0-7z" fill="#ffe800"/><path d="M172.200 66l1.5 2.200l-1.500 2.200l-1.500-2.200z" fill="#f00"/></g><rect x="166" y="73" width="14" height="1" fill="#000"/><polygon points="170.2,71 170.2,76 173.8,73.5" fill="#000" shape-rendering="auto"/><rect x="173.8" y="70.5" width="1.3" height="6" fill="#000"/><text x="189.500" y="69.600" font-family="Liberation Sans,sans-serif" font-size="9.300px" stroke="#0000ff" stroke-width="0.250" fill="#0000ff" textLength="13" lengthAdjust="spacingAndGlyphs">ON</text><rect x="189" y="73" width="14" height="1" fill="#000"/><polygon points="193.2,71 193.2,76 196.8,73.5" fill="#000" shape-rendering="auto"/><rect x="196.8" y="70.5" width="1.3" height="6" fill="#000"/><rect x="211" y="68" width="3" height="3" fill="#000"/><rect x="224" y="68" width="3" height="3" fill="#000"/><rect x="212" y="69" width="14" height="1.200" fill="#000"/><rect x="234" y="63" width="1" height="1" fill="#000"/><rect x="234" y="66" width="1" height="1" fill="#000"/><rect x="234" y="69" width="1" height="1" fill="#000"/><rect x="234" y="72" width="1" height="1" fill="#000"/><rect x="234" y="75" width="1" height="1" fill="#000"/><rect x="238" y="63" width="1" height="1" fill="#000"/><rect x="238" y="66" width="1" height="1" fill="#000"/><rect x="238" y="69" width="1" height="1" fill="#000"/><rect x="238" y="72" width="1" height="1" fill="#000"/><rect x="238" y="75" width="1" height="1" fill="#000"/><rect x="242" y="63" width="1" height="1" fill="#000"/><rect x="242" y="66" width="1" height="1" fill="#000"/><rect x="242" y="69" width="1" height="1" fill="#000"/><rect x="242" y="72" width="1" height="1" fill="#000"/><rect x="242" y="75" width="1" height="1" fill="#000"/><rect x="246" y="63" width="1" height="1" fill="#000"/><rect x="246" y="66" width="1" height="1" fill="#000"/><rect x="246" y="69" width="1" height="1" fill="#000"/><rect x="246" y="72" width="1" height="1" fill="#000"/><rect x="246" y="75" width="1" height="1" fill="#000"/><rect x="250" y="63" width="1" height="1" fill="#000"/><rect x="250" y="66" width="1" height="1" fill="#000"/><rect x="250" y="69" width="1" height="1" fill="#000"/><rect x="250" y="72" width="1" height="1" fill="#000"/><rect x="250" y="75" width="1" height="1" fill="#000"/><polygon points="258,68 265,68 261.5,72" fill="#000"/><rect x="272.700" y="62.700" width="9" height="13.600" fill="#fff" stroke="#000" stroke-width="1.400"/><path d="M292.500 80V59.500H314" stroke="#a0a0a0" fill="none"/><rect x="358" y="64" width="6" height="11" fill="none" stroke="#000"/><rect x="361" y="62" width="5" height="4" fill="#000"/><rect x="361" y="74" width="5" height="4" fill="#000"/><rect x="363" y="68" width="3" height="3" fill="#000"/><rect x="279.500" y="61.500" width="80" height="18" fill="#ffffe1" stroke="#767676"/><text x="282.500" y="74.900" font-family="Liberation Sans,sans-serif" font-size="12px" textLength="74.500" lengthAdjust="spacingAndGlyphs" shape-rendering="auto">Region Enable</text><g shape-rendering="auto"><path d="M375 69.500H389" stroke="#000" stroke-width="1.200"/><polygon points="375.500,66 381.200,69.600 375.500,73.200" fill="#000"/><polygon points="388.700,66 383,69.600 388.700,73.200" fill="#000"/></g><g shape-rendering="auto" fill="none" stroke="#000" stroke-width="1.200"><path d="M400.500 64.800 A6.300 6.300 0 1 1 399.300 73.500"/><polygon points="398,62.500 403.500,63.500 399.500,67.500" fill="#000" stroke="none"/><circle cx="404.800" cy="70" r="1" fill="#000" stroke="none"/></g><g shape-rendering="auto" fill="none" stroke="#000" stroke-width="1.200"><path d="M429.500 62V78" stroke="#b0b0b0" stroke-width="1"/><path d="M431.500 66.500H426 A4 4.200 0 0 0 426 75 H428"/><path d="M431 75h4" stroke-dasharray="2 1.500"/><polygon points="431,63.500 435.500,66.500 431,69.500" fill="#000" stroke="none"/></g><g shape-rendering="auto" fill="none" stroke="#000" stroke-width="1.200"><path d="M443 68.500H459" stroke="#b0b0b0" stroke-width="1"/><path d="M448 65V72 A3.800 4 0 0 0 455.600 72 V70"/><path d="M455.600 67V63.500" stroke-dasharray="2 1.500"/><polygon points="445,66.500 448,62 451,66.500" fill="#000" stroke="none"/></g><rect x="465" y="61" width="1" height="17" fill="#a0a0a0"/><rect x="466" y="61" width="1" height="17" fill="#fafafa"/><g transform="translate(473,63) scale(0.72)" shape-rendering="auto" fill="#000"><path d="M2 0h3.500v2h1.500v-2h3.500l2 8.500v3.500h-5v-5h-2.500v5h-5v-3.500z"/><rect x="1.500" y="6" width="1" height="4" fill="#fff"/><rect x="9" y="6" width="1" height="4" fill="#fff"/></g><polyline points="473,74.500 475,73 477,75.500 479,73 481,75.500 483,73 485,74.500" fill="none" stroke="#000080" shape-rendering="auto"/><g transform="translate(494,63.2) scale(1.05)" shape-rendering="auto" fill="#000"><path d="M2 0h3.500v2h1.500v-2h3.500l2 8.500v3.500h-5v-5h-2.500v5h-5v-3.500z"/><rect x="1.500" y="6" width="1" height="4" fill="#fff"/><rect x="9" y="6" width="1" height="4" fill="#fff"/></g><rect x="516" y="61" width="1" height="17" fill="#a0a0a0"/><rect x="517" y="61" width="1" height="17" fill="#fafafa"/><g fill="none" stroke="#a8a8a8"><rect x="522.500" y="62.500" width="15" height="10" stroke-width="1.600"/><path d="M525 65.500h10M525 68.500h10M530 63v9M530 73v3M526 77.500l4-3l4 3" /></g><rect x="544" y="61" width="1" height="17" fill="#a0a0a0"/><rect x="545" y="61" width="1" height="17" fill="#fafafa"/><g shape-rendering="auto"><circle cx="20.400" cy="95.500" r="7.200" fill="#008000" stroke="#101010" stroke-width="1.200"/><path d="M20.400 90l1.200 2.500l-1.200 4l-1.200-4z" fill="#fff"/><path d="M20.400 97.500l1.100 1.300l-1.100 1.300l-1.100-1.300z" fill="#fff"/><circle cx="43.500" cy="95.500" r="7.200" fill="#ff0000" stroke="#101010" stroke-width="1.200"/><path d="M40.500 92.800l6 5.400M46.500 92.800l-6 5.400" stroke="#fff" stroke-width="1.700"/></g><rect x="57" y="87" width="1" height="17" fill="#a0a0a0"/><rect x="63.500" y="88.500" width="6.500" height="6" fill="#a8a8a8" stroke="#000"/><rect x="72" y="96" width="6" height="6" fill="#a8a8a8" stroke="#000"/><rect x="66.500" y="90.500" width="8.500" height="8" fill="#f8f860" stroke="#000"/><rect x="89.500" y="90.500" width="8.500" height="8" fill="#f8f860" stroke="#000"/><rect x="86.500" y="88.500" width="6.500" height="6" fill="#a8a8a8" stroke="#000"/><rect x="95" y="96" width="6" height="6" fill="#a8a8a8" stroke="#000"/><rect x="108" y="87" width="1" height="17" fill="#a0a0a0"/><g shape-rendering="auto"><circle cx="121" cy="94" r="5.2" fill="#fff" stroke="#000" stroke-width="1.5"/><path d="M117.2 92.5 A4 4 0 0 1 120 90" stroke="#00e0e0" fill="none"/><path d="M122.5 97.8 A4 4 0 0 0 125 95" stroke="#00e0e0" fill="none"/><line x1="124.8" y1="97.8" x2="129.7" y2="102.7" stroke="#000" stroke-width="2.2" stroke-linecap="round"/><rect x="118" y="93" width="6" height="2" fill="#000"/><rect x="120" y="91" width="2" height="6" fill="#000"/></g><g shape-rendering="auto"><circle cx="144" cy="94" r="5.2" fill="#fff" stroke="#000" stroke-width="1.5"/><path d="M140.2 92.5 A4 4 0 0 1 143 90" stroke="#00e0e0" fill="none"/><path d="M145.5 97.8 A4 4 0 0 0 148 95" stroke="#00e0e0" fill="none"/><line x1="147.8" y1="97.8" x2="152.7" y2="102.7" stroke="#000" stroke-width="2.2" stroke-linecap="round"/><rect x="141" y="93" width="6" height="2" fill="#000"/></g><rect x="159" y="87" width="1" height="17" fill="#a0a0a0"/><path d="M166.500 101.500V91.500h3l1.500-2h4l1.500 2h4v10z" fill="#d2d2d2" stroke="#bcbcbc"/><rect x="187" y="87" width="1" height="17" fill="#a0a0a0"/><g shape-rendering="auto"><path d="M200.5 89.8 C205.5 89.5 208.0 93.5 207.5 98 C207.0 102 202.5 103.5 200.0 102 C198.0 101 200.0 98.5 197.5 97.5 C194.0 96.5 194.0 91 200.5 89.8 Z" fill="#f0e040" stroke="#000" stroke-width="1.6"/><circle cx="197.5" cy="93" r="1" fill="#800080"/><circle cx="201.5" cy="92" r="1" fill="#008000"/><circle cx="204.5" cy="94.5" r="1" fill="#0000c0"/><circle cx="204.5" cy="98.5" r="1" fill="#e00000"/><circle cx="201.5" cy="100" r="1" fill="#00c0c0"/></g><text x="216.800" y="102" font-family="Liberation Serif,serif" font-weight="bold" font-size="21px" textLength="13.500" lengthAdjust="spacingAndGlyphs">F</text><rect x="604" y="56" width="635" height="1" fill="#a0a0a0"/><rect x="604" y="57" width="635" height="1" fill="#fff"/><rect x="604" y="82" width="635" height="1" fill="#a0a0a0"/><rect x="604" y="83" width="635" height="1" fill="#fff"/><path d="M609 37 L609 48 L611.6 45.6 L613.6 50.2 L615.6 49.4 L613.7 44.9 L617.2 44.9 Z" fill="#000"/><g fill="none" stroke="#000" shape-rendering="auto"><line x1="628" y1="42.599999999999994" x2="634.2" y2="36.5"/><rect x="637.5" y="36.8" width="6" height="6" shape-rendering="crispEdges"/><path d="M631.5 44.3 l3 3 l-3 3 l-3 -3 z"/><circle cx="640.6" cy="47.3" r="3"/></g><polygon points="652,42 659,42 655.5,46" fill="#000"/><rect x="663" y="33" width="23" height="21" fill="#f8f8f8"/><path d="M663.5 54V33.5H686" stroke="#a0a0a0" fill="none"/><path d="M663.5 53.5H685.5V33.5" stroke="#fff" fill="none"/><rect x="667.500" y="38.500" width="12" height="8" fill="none" stroke="#000" stroke-dasharray="1 1"/><path d="M667 47.500 C671 51 673 49 675 44 C677 39 680 38 682.500 42.500" stroke="#000080" stroke-width="1.100" fill="none" shape-rendering="auto"/><path d="M689.500 42 C691 35.500 694 35.500 696 41 C697.500 45 699 44 700.500 40.500 C701.500 38.500 703 39 704 43" stroke="#000080" stroke-width="1.100" fill="none" shape-rendering="auto"/><line x1="692.5" y1="37" x2="692.5" y2="45" stroke="#000" stroke-dasharray="1 1"/><line x1="701.5" y1="37" x2="701.5" y2="45" stroke="#000" stroke-dasharray="1 1"/><path d="M689 46.500h16M691 49.500h5.500M698 49.500h5.500" stroke="#000" stroke-width="1.200"/><path d="M712 37.500h3.500v3.500h9v-3.500h3.500" stroke="#000080" stroke-width="1.300" fill="none"/><line x1="715.5" y1="41" x2="715.5" y2="49" stroke="#000" stroke-dasharray="1 1"/><line x1="724.5" y1="41" x2="724.5" y2="49" stroke="#000" stroke-dasharray="1 1"/><path d="M714 49.500h4M722 49.500h4" stroke="#000"/><rect x="718.500" y="48" width="3" height="3" fill="none" stroke="#000"/><line x1="737.5" y1="37" x2="737.5" y2="51" stroke="#000" stroke-dasharray="1 1"/><path d="M737 37.500h9M738 50.500h6" stroke="#000" stroke-dasharray="1 1"/><rect x="735" y="43" width="2" height="4" fill="#000"/><rect x="738.500" y="43.500" width="2" height="3" fill="none" stroke="#000"/><path d="M743 51 L748 39 C749 36.500 750.500 36.500 751 39.500" stroke="#000080" stroke-width="1.100" fill="none" shape-rendering="auto"/><text x="766" y="41.500" font-family="Liberation Sans,sans-serif" font-weight="bold" font-size="7px">1.0</text><path d="M773 42.500h-4l-5 5" stroke="#000" fill="none" shape-rendering="auto"/><polygon points="762.500,45 763,49 767,48.500" fill="#000" shape-rendering="auto"/><path d="M758 47.500h4.500v3h7v-3h4.500" stroke="#000080" stroke-width="1.300" fill="none"/><text x="783" y="42" font-family="Liberation Sans,sans-serif" font-weight="bold" font-size="7.500px" fill="#800000" textLength="11" lengthAdjust="spacingAndGlyphs">F()</text><line x1="782.5" y1="40" x2="782.5" y2="51" stroke="#000" stroke-dasharray="1 1"/><line x1="795.5" y1="40" x2="795.5" y2="51" stroke="#000" stroke-dasharray="1 1"/><polygon points="780.500,43 784.500,43 782.500,46.500" fill="#000"/><polygon points="793.500,43 797.500,43 795.500,46.500" fill="#000"/><path d="M782 50 C785 42.500 793 42.500 796 50" stroke="#000080" stroke-width="1.100" fill="none" shape-rendering="auto"/><text x="804.700" y="50" font-family="Liberation Serif,serif" font-weight="bold" font-size="20px" textLength="14.200" lengthAdjust="spacingAndGlyphs">T</text><rect x="826" y="35" width="1" height="17" fill="#a0a0a0"/><rect x="827" y="35" width="1" height="17" fill="#fafafa"/><g shape-rendering="auto"><rect x="832.500" y="40.500" width="11" height="10" fill="#fff" stroke="#000" stroke-width="1.300"/><path d="M834.500 45.500h2M838 45.500h4M834.500 48h2M838 48h4" stroke="#000"/><path d="M835 42l4-4.500l4 0l3-1.500" stroke="#000" fill="none" stroke-width="1.300"/><path d="M836 41.500l3-3.500l3 3.500z" fill="#c0c0c0" stroke="#000" stroke-width="0.600"/><polygon points="845,36 848,36 848,43.500 845,41.500" fill="#0000c0"/></g><rect x="854" y="35" width="1" height="17" fill="#a0a0a0"/><rect x="855" y="35" width="1" height="17" fill="#fafafa"/><polygon points="862,37.800 862,49.400 874.200,43.600" fill="#000" shape-rendering="auto"/><rect x="886" y="39" width="12" height="10.500" fill="#fff"/><rect x="885" y="38" width="12" height="10.500" fill="#a0a0a0"/><rect x="910" y="39" width="4" height="10.500" fill="#fff"/><rect x="909" y="38" width="4" height="10.500" fill="#a0a0a0"/><rect x="917" y="39" width="4" height="10.500" fill="#fff"/><rect x="916" y="38" width="4" height="10.500" fill="#a0a0a0"/><rect x="928" y="35" width="1" height="17" fill="#a0a0a0"/><rect x="929" y="35" width="1" height="17" fill="#fafafa"/><g shape-rendering="auto"><path d="M934 50.500L946.500 38.500H950" stroke="#000" fill="none" stroke-width="1"/><circle cx="938.300" cy="46.500" r="1.300"/><circle cx="943.200" cy="41.700" r="1.300"/></g><line x1="958.500" y1="49.500" x2="970.500" y2="37.500" stroke="#000" stroke-width="1" shape-rendering="auto"/><rect x="957" y="48" width="3" height="3" fill="#fff" stroke="#000"/><rect x="963" y="42" width="3" height="3" fill="#fff" stroke="#000"/><rect x="969" y="36" width="3" height="3" fill="#fff" stroke="#000"/><rect x="979" y="35" width="1" height="17" fill="#a0a0a0"/><rect x="980" y="35" width="1" height="17" fill="#fafafa"/><rect x="985.500" y="36.500" width="15" height="14" fill="#f8f8f8" stroke="#000"/><path d="M987 37.500h12M987 49.500h12" stroke="#000" stroke-width="2" stroke-dasharray="1 1" /><path d="M986.500 38v12M999.500 38v12" stroke="#000" stroke-width="2" stroke-dasharray="1 1"/><rect x="1008.500" y="36.500" width="15" height="14" fill="#f8f8f8" stroke="#000"/><path d="M1013.500 37v13M1018.500 37v13M1009 41.500h14M1009 45.500h14" stroke="#000" stroke-dasharray="1 1"/><path d="M1012 41.500h3M1017 41.500h3M1012 45.500h3M1017 45.500h3M1013.500 40v3M1018.500 40v3M1013.500 44v3M1018.500 44v3" stroke="#000"/><rect x="1030" y="35" width="1" height="17" fill="#a0a0a0"/><rect x="1031" y="35" width="1" height="17" fill="#fafafa"/><rect x="1033" y="33" width="23" height="21" fill="#f8f8f8"/><path d="M1033.5 54V33.5H1056" stroke="#a0a0a0" fill="none"/><path d="M1033.5 53.5H1055.5V33.5" stroke="#fff" fill="none"/><rect x="1056" y="33" width="23" height="21" fill="#f8f8f8"/><path d="M1056.5 54V33.5H1079" stroke="#a0a0a0" fill="none"/><path d="M1056.5 53.5H1078.5V33.5" stroke="#fff" fill="none"/><rect x="1079" y="33" width="23" height="21" fill="#f8f8f8"/><path d="M1079.5 54V33.5H1102" stroke="#a0a0a0" fill="none"/><path d="M1079.5 53.5H1101.5V33.5" stroke="#fff" fill="none"/><rect x="1037.500" y="36.500" width="15" height="14" fill="#fff" stroke="#000" stroke-width="1.300"/><path d="M1040.500 37v13M1042.500 37v13M1044.500 37v13M1046.500 37v13M1048.500 37v13M1050.500 37v13" stroke="#000"/><rect x="1060.500" y="36.500" width="15" height="14" fill="#fff" stroke="#000" stroke-width="1.300"/><path d="M1061 38.500h14M1061 40.500h14M1061 42.500h14M1061 44.500h14M1061 46.500h14M1061 48.500h14" stroke="#000"/><rect x="1083.500" y="36.500" width="15" height="14" fill="#fff" stroke="#000" stroke-width="1.300"/><path d="M1090.500 37v13M1092.500 37v13M1094.500 37v13M1096.500 37v13" stroke="#000" stroke-dasharray="1 1"/><path d="M1089.500 37v13" stroke="#000"/><rect x="1105.500" y="36.500" width="15" height="14" fill="#fff" stroke="#000" stroke-width="1.300"/><path d="M1110.500 37v13M1115.500 37v13" stroke="#000" stroke-dasharray="1 1"/><rect x="1127" y="35" width="1" height="17" fill="#a0a0a0"/><rect x="1128" y="35" width="1" height="17" fill="#fafafa"/><rect x="1130" y="33" width="23" height="21" fill="#f8f8f8"/><path d="M1130.5 54V33.5H1153" stroke="#a0a0a0" fill="none"/><path d="M1130.5 53.5H1152.5V33.5" stroke="#fff" fill="none"/><rect x="1134.500" y="36.500" width="15" height="14" fill="#f8f8f8" stroke="#000" stroke-width="1.300"/><path d="M1135 46.500h14" stroke="#000" stroke-width="1.300"/><line x1="1163.5" y1="37" x2="1163.5" y2="51" stroke="#000" stroke-dasharray="1 1"/><path d="M1156 44.500h16" stroke="#000" stroke-dasharray="2 2"/><path d="M1156.500 48.500 C1162 46.500 1166 43 1172 39" stroke="#0000ff" stroke-width="1.100" fill="none" shape-rendering="auto"/><rect x="1178" y="35" width="1" height="17" fill="#a0a0a0"/><rect x="1179" y="35" width="1" height="17" fill="#fafafa"/><path d="M607 76 C613 75 613.500 64 620 62.500" stroke="#0000ff" stroke-width="1.100" fill="none" shape-rendering="auto"/><line x1="614.5" y1="62" x2="614.5" y2="77" stroke="#000" stroke-dasharray="1 1"/><path d="M607.500 68.500h5" stroke="#000" stroke-width="1.300"/><polygon points="610,65.500 614,68.500 610,71.500" fill="#000" shape-rendering="auto"/><path d="M628 74.500 C634 74.500 638 72 644 68" stroke="#0000ff" stroke-width="1.100" fill="none" shape-rendering="auto"/><line x1="636.5" y1="62" x2="636.5" y2="77" stroke="#000" stroke-dasharray="1 1"/><path d="M636.500 64v6" stroke="#000" stroke-width="1.300"/><polygon points="633.500,68.500 639.500,68.500 636.500,72.500" fill="#000" shape-rendering="auto"/><path d="M651.500 74.500 C657 74.500 662 72 667 68" stroke="#0000ff" stroke-width="1.100" fill="none" shape-rendering="auto"/><line x1="659.5" y1="62" x2="659.5" y2="77" stroke="#000" stroke-dasharray="1 1"/><line x1="663.5" y1="62" x2="663.5" y2="77" stroke="#000" stroke-dasharray="1 1"/><path d="M659.500 64v6M663.500 64v4" stroke="#000" stroke-width="1.300"/><polygon points="656.500,68.500 662.500,68.500 659.500,72.500" fill="#000" shape-rendering="auto"/><polygon points="661,66.500 666.500,66.500 663.500,70.500" fill="#000" shape-rendering="auto"/><g shape-rendering="auto" fill="none" stroke="#b4b4b4" stroke-width="1.100"><path d="M674 64.500h5l5 5h6"/><path d="M674 67h4.500l5 5h6.500"/><path d="M674 69.500h4l5 5h7"/></g><rect x="696" y="61" width="1" height="17" fill="#a0a0a0"/><rect x="697" y="61" width="1" height="17" fill="#fafafa"/><rect x="702.700" y="63.700" width="15" height="11.600" fill="#fff" stroke="#000080" stroke-width="1.500"/><path d="M704 67.500l2-1.500l2 1.500l2-1.500M714 68l3-1" stroke="#0000ff" fill="none" shape-rendering="auto"/><path d="M704 73.500c3 1 4-1 5-1M713 73.500c2 0 3-1.500 4-3" stroke="#f00" fill="none" shape-rendering="auto"/><path d="M706 72l6-6h4l-5.500 6z" fill="#fff" stroke="#000" stroke-width="1.300" shape-rendering="auto"/><path d="M707 72.500h5" stroke="#000" stroke-width="1.500"/><rect x="724" y="61" width="1" height="17" fill="#a0a0a0"/><rect x="725" y="61" width="1" height="17" fill="#fafafa"/><rect x="727" y="59" width="23" height="21" fill="#f8f8f8"/><path d="M727.5 80V59.5H750" stroke="#a0a0a0" fill="none"/><path d="M727.5 79.5H749.5V59.5" stroke="#fff" fill="none"/><line x1="738.5" y1="62" x2="738.5" y2="78" stroke="#000" stroke-dasharray="1 1"/><path d="M731 70.500h16" stroke="#0000ff" stroke-width="1.300"/><g fill="#0000ff" shape-rendering="auto"><circle cx="732.500" cy="70.500" r="1.700"/><circle cx="738.500" cy="70.500" r="1.700"/><circle cx="744.500" cy="70.500" r="1.700"/></g><line x1="760.5" y1="62" x2="760.5" y2="77" stroke="#000" stroke-dasharray="1 1"/><path d="M753 69.500h16" stroke="#0000ff" stroke-width="1.300"/><g fill="#0000ff" shape-rendering="auto"><circle cx="755" cy="69.500" r="1.700"/><circle cx="766.500" cy="69.500" r="1.700"/></g><line x1="784.5" y1="63" x2="784.5" y2="77" stroke="#000" stroke-dasharray="1 1"/><path d="M776 77 C781 73 781 62 784.500 62 C788 62 788 73 792 76" stroke="#0000ff" stroke-width="1.100" fill="none" shape-rendering="auto"/><line x1="807.5" y1="63" x2="807.5" y2="77" stroke="#000" stroke-dasharray="1 1"/><path d="M799.500 62.500 C803 66 803 76.500 807.500 76.500 C812 76.500 812 66 815 62.500" stroke="#0000ff" stroke-width="1.100" fill="none" shape-rendering="auto"/><line x1="833.5" y1="63" x2="833.5" y2="77" stroke="#000" stroke-dasharray="1 1"/><path d="M822 73 C823.500 70 825.500 71 826.500 74 C828 77 830 72 833.500 65 C835.500 68 836.500 71 838 74" stroke="#0000ff" stroke-width="1.100" fill="none" shape-rendering="auto"/><line x1="856.5" y1="63" x2="856.5" y2="77" stroke="#000" stroke-dasharray="1 1"/><path d="M845 66 C846.500 63 849 63 850.500 66 C852.500 70 854 72 856.500 74.500 C858.500 71 860 68 861 65" stroke="#0000ff" stroke-width="1.100" fill="none" shape-rendering="auto"/><line x1="875.5" y1="62" x2="875.5" y2="77" stroke="#000" stroke-dasharray="1 1"/><path d="M868.500 77L884 62" stroke="#0000ff" stroke-width="1.300" shape-rendering="auto"/><line x1="898.5" y1="64" x2="898.5" y2="77" stroke="#000" stroke-dasharray="1 1"/><path d="M891 74 C893 68 895 64 898 64 C901 64 902 69 903.500 73M895 77 C896.500 71 899 67 902 67 C905 67 906 71 907 76" stroke="#0000ff" stroke-width="1.200" fill="none" shape-rendering="auto"/><line x1="921.5" y1="62" x2="921.5" y2="76" stroke="#000" stroke-dasharray="1 1"/><path d="M914 63 C916 69 918 75 921 75 C924 75 925 69 926.500 64M918 62 C919.500 68 922 73 925 73 C928 73 929 68 930 63" stroke="#0000ff" stroke-width="1.200" fill="none" shape-rendering="auto"/><line x1="945.5" y1="62" x2="945.5" y2="77" stroke="#000" stroke-dasharray="1 1"/><path d="M937.500 62.500 C941 69 943 71 945.500 71 C948 71 950 69 953.500 62.500M937.500 66 C941 72 943 73.500 945.500 73.500 C948 73.500 950 72 953.500 66M938 70 C941 75 943 76 945.500 76 C948 76 950 75 953 70" stroke="#0000ff" stroke-width="1.100" fill="none" shape-rendering="auto"/><circle cx="945.500" cy="74.500" r="1.800" fill="#0000ff" shape-rendering="auto"/><line x1="968.5" y1="62" x2="968.5" y2="77" stroke="#000" stroke-dasharray="1 1"/><path d="M960.500 72 C964 66 966 64.500 968.500 64.500 C971 64.500 973 66 976.500 72M960.500 75 C964 69 966 67.500 968.500 67.500 C971 67.500 973 69 976.500 75M961 77.500 C964 72 966 70.500 968.500 70.500 C971 70.500 973 72 976 77.500" stroke="#0000ff" stroke-width="1.100" fill="none" shape-rendering="auto"/><circle cx="968.500" cy="65" r="1.800" fill="#0000ff" shape-rendering="auto"/><rect x="982" y="61" width="1" height="17" fill="#a0a0a0"/><rect x="983" y="61" width="1" height="17" fill="#fafafa"/><g shape-rendering="auto"><path d="M989 70.500h11v6.500h-11z" fill="#e0d820" stroke="#000"/><path d="M1000 70.500l4-3v6.500l-4 3z" fill="#b0a810" stroke="#000"/><path d="M989 70.500l4-3h11l-4 3z" fill="#f0f060" stroke="#000"/><rect x="996" y="62.500" width="5.500" height="6" fill="#fff" stroke="#c00000"/><path d="M997 64l3 3" stroke="#c00000"/><path d="M990 67l3-3.500l3 3.500z" fill="#c0c0ff" stroke="#000080" stroke-width="0.800"/><rect x="993" y="72" width="3" height="3" fill="#000"/></g><polygon points="1012,68 1019,68 1015.5,72" fill="#000"/><rect x="1025" y="61" width="1" height="17" fill="#a0a0a0"/><rect x="1026" y="61" width="1" height="17" fill="#fafafa"/><rect x="1031.500" y="62.500" width="15" height="14" fill="#fff" stroke="#000" stroke-width="1.200"/><path d="M1033.500 64.5h3M1038 64.5h3M1042.500 64.5h2.500M1033.500 66.5h3M1038 66.5h3M1042.500 66.5h2.500M1033.500 68.5h3M1038 68.5h3M1042.500 68.5h2.500M1033.500 70.5h3M1038 70.5h3M1042.500 70.5h2.500M1033.500 72.5h3M1038 72.5h3M1042.500 72.5h2.500M1033.500 74.5h3M1038 74.5h3M1042.500 74.5h2.500" stroke="#000"/><rect x="1053" y="61" width="1" height="17" fill="#a0a0a0"/><rect x="1054" y="61" width="1" height="17" fill="#fafafa"/><text x="1058.500" y="76.300" font-family="Liberation Sans,sans-serif" font-size="19.500px" stroke="#000" stroke-width="0.300" textLength="16.500" lengthAdjust="spacingAndGlyphs">'P'</text><rect x="1081" y="61" width="1" height="17" fill="#a0a0a0"/><rect x="1082" y="61" width="1" height="17" fill="#fafafa"/><rect x="1084" y="59" width="23" height="21" fill="#f8f8f8"/><path d="M1084.5 80V59.5H1107" stroke="#a0a0a0" fill="none"/><path d="M1084.5 79.5H1106.5V59.5" stroke="#fff" fill="none"/><rect x="1107" y="59" width="23" height="21" fill="#f8f8f8"/><path d="M1107.5 80V59.5H1130" stroke="#a0a0a0" fill="none"/><path d="M1107.5 79.5H1129.5V59.5" stroke="#fff" fill="none"/><text x="1087" y="69" font-family="Liberation Sans,sans-serif" font-weight="bold" font-size="9px" fill="#800000">X</text><g shape-rendering="auto" stroke="#000" fill="none"><path d="M1095.5 67V75M1090 71 Q1095.5 66 1101 71" stroke-width="1.2"/><path d="M1092.5 76.5h6" stroke-width="1.6"/><path d="M1088 73h5M1098 73h5" stroke="#c8c000" stroke-width="1.6"/><path d="M1090.5 70v2.5M1100.5 70v2.5" stroke-width="0.8"/></g><text x="1110" y="69" font-family="Liberation Sans,sans-serif" font-weight="bold" font-size="9px" fill="#800000">Y</text><g shape-rendering="auto" stroke="#000" fill="none"><path d="M1118.5 67V75M1113 71 Q1118.5 66 1124 71" stroke-width="1.2"/><path d="M1115.5 76.5h6" stroke-width="1.6"/><path d="M1111 73h5M1121 73h5" stroke="#c8c000" stroke-width="1.6"/><path d="M1113.5 70v2.5M1123.5 70v2.5" stroke-width="0.8"/></g><rect x="1132" y="61" width="1" height="17" fill="#a0a0a0"/><rect x="1133" y="61" width="1" height="17" fill="#fafafa"/><g shape-rendering="auto"><circle cx="1144.5" cy="68" r="5.2" fill="#fff" stroke="#000" stroke-width="1.5"/><path d="M1140.7 66.5 A4 4 0 0 1 1143.5 64" stroke="#00e0e0" fill="none"/><path d="M1146.0 71.8 A4 4 0 0 0 1148.5 69" stroke="#00e0e0" fill="none"/><line x1="1148.3" y1="71.8" x2="1153.2" y2="76.7" stroke="#000" stroke-width="2.2" stroke-linecap="round"/><rect x="1141.5" y="67" width="6" height="2" fill="#000"/><rect x="1143.5" y="65" width="2" height="6" fill="#000"/></g><g shape-rendering="auto"><circle cx="1167.5" cy="68" r="5.2" fill="#fff" stroke="#000" stroke-width="1.5"/><path d="M1163.7 66.5 A4 4 0 0 1 1166.5 64" stroke="#00e0e0" fill="none"/><path d="M1169.0 71.8 A4 4 0 0 0 1171.5 69" stroke="#00e0e0" fill="none"/><line x1="1171.3" y1="71.8" x2="1176.2" y2="76.7" stroke="#000" stroke-width="2.2" stroke-linecap="round"/><rect x="1164.5" y="67" width="6" height="2" fill="#000"/></g><g shape-rendering="auto"><circle cx="1190.5" cy="68" r="5.2" fill="#fff" stroke="#000" stroke-width="1.5"/><path d="M1186.7 66.5 A4 4 0 0 1 1189.5 64" stroke="#00e0e0" fill="none"/><path d="M1192.0 71.8 A4 4 0 0 0 1194.5 69" stroke="#00e0e0" fill="none"/><line x1="1194.3" y1="71.8" x2="1199.2" y2="76.7" stroke="#000" stroke-width="2.2" stroke-linecap="round"/><rect x="1186.5" y="65" width="8" height="6" fill="#fff" stroke="#000080"/><path d="M1187.5 69 l1.5 -2 l1.5 2 l1.5 -2 l1.5 2" stroke="#f00" fill="none"/></g><rect x="1206" y="61" width="1" height="17" fill="#a0a0a0"/><rect x="1207" y="61" width="1" height="17" fill="#fafafa"/><g shape-rendering="auto"><path d="M613.5 90.3 C618.5 90.0 621.0 94.0 620.5 98.5 C620.0 102.5 615.5 104.0 613.0 102.5 C611.0 101.5 613.0 99.0 610.5 98.0 C607.0 97.0 607.0 91.5 613.5 90.3 Z" fill="#c8c8c8" stroke="#a0a0a0" stroke-width="1.6"/><path d="M609.5 93.5h9M609.5 96.5h10M612.5 99.5h7M611.5 91.5v10M615.5 91.5v11" stroke="#a8a8a8" fill="none"/></g><text x="629.800" y="102" font-family="Liberation Serif,serif" font-weight="bold" font-size="21px" textLength="13.500" lengthAdjust="spacingAndGlyphs">F</text><rect x="8" y="8" width="16" height="16" fill="#000"/><rect x="9" y="9" width="14" height="14" fill="#d2d2d2"/><g shape-rendering="auto" fill="none"><path d="M13.500 9.500V21.500H18.500M9.500 13.500h2.500M11 12v3M11.500 17l-1 4M14 15.500L17.500 10.500L19.500 13.500L17.500 16.500L19.500 19.500M15.500 12.500v5" stroke="#0040ff" stroke-width="1.100"/><path d="M20.500 11.500h2M15 13.500h2M20 13.500h2M20 17.500h2" stroke="#ff0000" stroke-width="1.200"/></g><rect x="19" y="21" width="4" height="2" fill="#000"/><rect x="19.500" y="21.500" width="3" height="1" fill="#c0c0c0"/><rect x="601" y="8" width="16" height="16" fill="#000"/><rect x="602" y="9" width="14" height="3" fill="#0000e0"/><rect x="602" y="12" width="14" height="11" fill="#fff"/><path d="M605 13.500h9" stroke="#808080"/><rect x="606" y="15.500" width="8" height="6" fill="#00f0f0" stroke="#000"/><path d="M607 19.500q3-3 6 0" stroke="#000" fill="none" shape-rendering="auto"/><path d="M603.500 16v1M603.500 18v1M603.500 20v1" stroke="#808080"/><g shape-rendering="auto"><rect x="498.500" y="16.500" width="10" height="3" rx="1" fill="#f4f6fa" stroke="#5a6478"/><rect x="531.500" y="12.500" width="10" height="8" rx="1" fill="#f4f6fa" stroke="#5a6478"/><rect x="534.500" y="15.500" width="4" height="2" fill="#c8d2e2" stroke="#5a6478"/><path d="M565.500 12.500l8 8M573.500 12.500l-8 8" stroke="#5a6478" stroke-width="4.500"/><path d="M565.500 12.500l8 8M573.500 12.500l-8 8" stroke="#f4f6fa" stroke-width="2.500"/></g><g shape-rendering="auto"><rect x="1155" y="16.500" width="10" height="3" rx="1" fill="#fff" stroke="#3a4660"/><rect x="1188" y="12.500" width="10" height="8" rx="1" fill="#fff" stroke="#3a4660"/><rect x="1191" y="15.500" width="4" height="2" fill="#9fb4d4" stroke="#3a4660"/><path d="M1222 12.500l8 8M1230 12.500l-8 8" stroke="#4a2020" stroke-width="4.500"/><path d="M1222 12.500l8 8M1230 12.500l-8 8" stroke="#fff" stroke-width="2.500"/></g><text x="28.3" y="21" textLength="121.9" font-family="Liberation Sans,sans-serif" font-size="12px" lengthAdjust="spacingAndGlyphs" shape-rendering="auto" fill="#1c1c1c">C:\MC9\DATA\Petrov\</text><text x="150.4" y="21" textLength="107.9" font-family="Liberation Sans,sans-serif" font-size="12px" lengthAdjust="spacingAndGlyphs" shape-rendering="auto" fill="#1c1c1c">switching distortion\</text><text x="258.6" y="21" textLength="51.0" font-family="Liberation Sans,sans-serif" font-size="12px" lengthAdjust="spacingAndGlyphs" shape-rendering="auto" fill="#1c1c1c">УК_RIAA\</text><text x="309.9" y="21" textLength="114.4" font-family="Liberation Sans,sans-serif" font-size="12px" lengthAdjust="spacingAndGlyphs" shape-rendering="auto" fill="#1c1c1c">Stanley_AudioXpress_</text><text x="424.3" y="21" textLength="59.5" font-family="Liberation Sans,sans-serif" font-size="12px" lengthAdjust="spacingAndGlyphs" shape-rendering="auto" fill="#1c1c1c">2004-07_5...</text><text x="621.3" y="21" textLength="95" font-family="Liberation Sans,sans-serif" font-size="12px" lengthAdjust="spacingAndGlyphs" shape-rendering="auto" fill="#1c1c1c">Transient Analysis</text></svg></body></html>
